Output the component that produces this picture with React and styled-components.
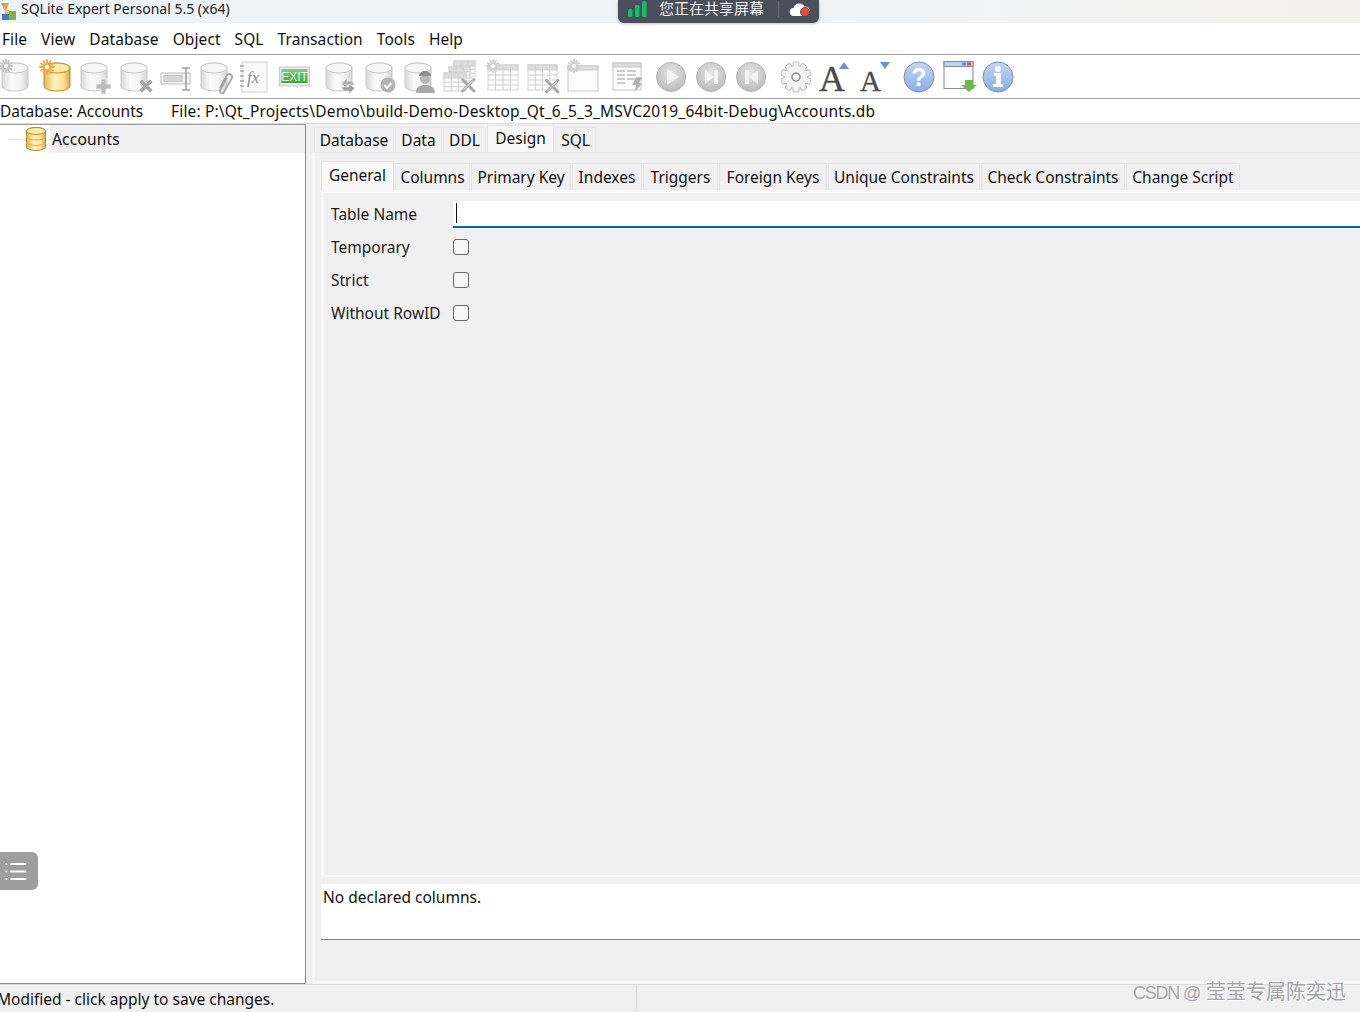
import React from 'react';
import styled, { createGlobalStyle } from 'styled-components';

const GlobalStyle = createGlobalStyle`
  html, body { margin: 0; padding: 0; height: 100%; overflow: hidden; }
  body { font-family: "Noto Sans", "Noto Sans CJK SC", sans-serif; color: #111; background: #fff; }
  #root { height: 1012px; }
`;

const Window = styled.div`
  position: relative;
  display: flex;
  flex-direction: column;
  width: 1360px;
  height: 1012px;
  overflow: hidden;
`;

const TitleBar = styled.div`
  height: 23px;
  display: flex;
  align-items: center;
  gap: 3px;
  font-size: 14px;
  color: #222;
  background: linear-gradient(90deg, #eef3f8 0%, #eff3f7 60%, #f3f1ec 100%);
`;

const TitleText = styled.span`
  margin-top: -6px;
`;

const MenuBar = styled.div`
  height: 31px;
  display: flex;
  align-items: center;
  gap: 14px;
  padding-left: 2px;
  font-size: 15.5px;
  letter-spacing: 0.08px;
  background: #fff;
  border-bottom: 1px solid #a0a0a0;
`;

const MenuItem = styled.span``;

const ToolBar = styled.div`
  height: 43px;
  display: flex;
  align-items: center;
  background: #fff;
  border-bottom: 1px solid #a0a0a0;
`;

const ToolButton = styled.div`
  flex: none;
  width: 32px;
  height: 34px;
  margin-left: ${(p) => p.$gap}px;
  display: flex;
  svg { display: block; overflow: visible; }
`;

const PathBar = styled.div`
  height: 24px;
  display: flex;
  align-items: center;
  font-size: 15.5px;
  background: #fff;
  border-bottom: 1px solid #dcdcdc;
`;

const PathLabel = styled.span`
  width: 171px;
  flex: none;
`;

const PathValue = styled.span`
  letter-spacing: 0.17px;
  white-space: nowrap;
`;

const Main = styled.div`
  flex: 1;
  min-height: 0;
  display: flex;
  background: #f0f0f0;
`;

const TreePane = styled.div`
  width: 305px;
  flex: none;
  background: #fff;
  border-top: 1px solid #a0a0a0;
  border-right: 1px solid #8a8a92;
  border-bottom: 1px solid #8a8a92;
`;

const TreeRow = styled.div`
  height: 28px;
  display: flex;
  align-items: center;
  font-size: 15.5px;
  padding-left: 8px;
  background: linear-gradient(90deg, #fff 0, #fff 50px, #f0f0f0 50px);
`;

const TreeBranch = styled.span`
  width: 14px;
  margin-right: 4px;
  border-top: 1px solid #dedede;
  flex: none;
`;

const TreeLabel = styled.span`
  margin-left: 6px;
  letter-spacing: 0.2px;
`;

const RightPane = styled.div`
  flex: 1;
  min-width: 0;
  display: flex;
  flex-direction: column;
  padding: 1px 0 0 6px;
`;

const TabRow = styled.div`
  display: flex;
  align-items: flex-end;
  flex: none;
  height: ${(p) => p.$height}px;
  margin-left: ${(p) => p.$indent || 0}px;
`;

const Tab = styled.div`
  box-sizing: border-box;
  height: ${(p) => (p.$active ? p.$height + 2 : p.$height)}px;
  width: ${(p) => p.$width}px;
  margin-right: 1px;
  font-size: 15.5px;
  display: flex;
  align-items: center;
  justify-content: center;
  background: ${(p) => (p.$active ? '#f8f8f8' : '#f0f0f0')};
  border: 1px solid #e6e6e6;
  border-bottom: none;
  padding-bottom: ${(p) => (p.$active ? 3 : 0)}px;
  white-space: nowrap;
`;

const OuterPane = styled.div`
  flex: 1;
  min-height: 0;
  display: flex;
  flex-direction: column;
  background: #f0f0f0;
  padding: 8px 0 0 6px;
  border-top: 1px solid #e8e8e8;
  border-left: 3px solid #f7f7f7;
  border-bottom: 3px solid #f7f7f7;
`;

const InnerPane = styled.div`
  box-sizing: border-box;
  height: 687px;
  flex: none;
  background: #f0f0f0;
  border: solid #f8f8f8;
  border-width: 3px 0 2px 3px;
  padding: 8px 0 0 7px;
  display: flex;
  flex-direction: column;
`;

const FormRow = styled.div`
  display: flex;
  align-items: center;
  height: ${(p) => p.$height}px;
  font-size: 15.5px;
`;

const FormLabel = styled.label`
  width: 122px;
  flex: none;
  color: #1c1c1c;
  margin-top: ${(p) => (p.$lift ? -1 : 0)}px;
`;

const TextInput = styled.div`
  flex: 1;
  height: 27px;
  box-sizing: border-box;
  background: #fff;
  border-bottom: 2px solid #0067c0;
  padding: 2px 0 3px 3px;
  display: flex;
`;

const Caret = styled.span`
  width: 1px;
  background: #111;
`;

const CheckBox = styled.span`
  box-sizing: border-box;
  width: 16px;
  height: 16px;
  border: 1px solid #6a6a6a;
  border-radius: 3px;
  background: #f6f6f6;
`;

const Checks = styled.div`
  padding-top: 2px;
`;

const Description = styled.div`
  box-sizing: border-box;
  flex: none;
  height: 56px;
  margin-top: 7px;
  padding: 2px 0 0 2px;
  background: #fff;
  border-bottom: 1px solid #808080;
  font-size: 15.5px;
`;

const StatusBar = styled.div`
  box-sizing: border-box;
  flex: none;
  height: 28px;
  display: flex;
  align-items: center;
  background: #f0f0f0;
  font-size: 15.5px;
  border-top: 1px solid #dcdcdc;
`;

const StatusCell = styled.div`
  box-sizing: border-box;
  width: 637px;
  height: 100%;
  display: flex;
  align-items: center;
  border-right: 1px solid #d8d8d8;
  overflow: hidden;
`;

const StatusText = styled.span`
  margin-left: -3px;
  white-space: nowrap;
`;

const ShareBadge = styled.div`
  position: absolute;
  left: 618px;
  top: 0;
  width: 201px;
  height: 23px;
  box-sizing: border-box;
  display: flex;
  align-items: center;
  padding: 0 0 5px 10px;
  background: #4b4f5c;
  border-radius: 0 0 6px 6px;
  color: #f1f1f1;
  font-size: 15px;
  font-family: "Noto Sans CJK SC", sans-serif;
  box-shadow: 0 1px 3px rgba(0, 0, 0, 0.25);
`;

const ShareText = styled.span`
  margin-left: 11px;
  width: 119px;
  flex: none;
  line-height: 14px;
  margin-top: -2px;
  white-space: nowrap;
`;

const ShareDivider = styled.span`
  width: 1px;
  height: 16px;
  background: #6c707c;
  flex: none;
  margin-right: 10px;
`;

const FloatButton = styled.div`
  position: absolute;
  left: 0;
  top: 852px;
  width: 38px;
  height: 38px;
  box-sizing: border-box;
  padding-left: 5px;
  background: #9e9e9e;
  border-radius: 0 6px 6px 0;
  display: flex;
  align-items: center;
`;

const Watermark = styled.div`
  position: absolute;
  right: 14px;
  top: 979px;
  font-family: "Liberation Sans", "Noto Sans CJK SC", sans-serif;
  font-size: 20px;
  line-height: 26px;
  color: rgba(150, 150, 150, 0.85);
  text-shadow: 1px 1px 0 rgba(255, 255, 255, 0.7);
  white-space: nowrap;
`;

const WatermarkLatin = styled.span`
  font-size: 18px;
  letter-spacing: -1.200px;
  margin-right: 6px;
`;

const Defs = styled.svg`
  width: 0;
  height: 0;
  display: block;
  flex: none;
`;

const SharedDefs = () => (
  <Defs aria-hidden="true">
    <defs>
      <linearGradient id="grayBody" x1="0" x2="1" y1="0" y2="0">
        <stop offset="0" stopColor="#d8d8d8" />
        <stop offset="0.35" stopColor="#fafafa" />
        <stop offset="0.7" stopColor="#f4f4f4" />
        <stop offset="1" stopColor="#d4d4d4" />
      </linearGradient>
      <linearGradient id="yellowBody" x1="0" x2="1" y1="0" y2="0">
        <stop offset="0" stopColor="#e9b552" />
        <stop offset="0.4" stopColor="#fff2c0" />
        <stop offset="0.75" stopColor="#fbe09a" />
        <stop offset="1" stopColor="#dba444" />
      </linearGradient>
      <linearGradient id="blueBall" x1="0" x2="0" y1="0" y2="1">
        <stop offset="0" stopColor="#c3d6f2" />
        <stop offset="1" stopColor="#88ade8" />
      </linearGradient>
      <radialGradient id="grayBall" cx="0.5" cy="0.35" r="0.7">
        <stop offset="0" stopColor="#e6e6e6" />
        <stop offset="1" stopColor="#b8b8b8" />
      </radialGradient>
      <linearGradient id="greenExit" x1="0" x2="0" y1="0" y2="1">
        <stop offset="0" stopColor="#7fd07f" />
        <stop offset="1" stopColor="#3fa33f" />
      </linearGradient>
    </defs>
  </Defs>
);

const Icon = ({ children }) => (
  <svg width="32" height="34" viewBox="0 0 32 34">{children}</svg>
);

const Cylinder = ({ x = 2, y = 3, w = 26, h = 28, tone = 'gray' }) => {
  const e = 5;
  const rx = w / 2;
  const stroke = tone === 'gray' ? '#c8c8c8' : '#c08a2c';
  const fill = tone === 'gray' ? 'url(#grayBody)' : 'url(#yellowBody)';
  const top = tone === 'gray' ? '#f6f6f6' : '#fde9a8';
  return (
    <g stroke={stroke} strokeWidth="1">
      <path
        d={`M${x} ${y + e}A${rx} ${e} 0 0 1 ${x + w} ${y + e}V${y + h - e}A${rx} ${e} 0 0 1 ${x} ${y + h - e}Z`}
        fill={fill}
      />
      <ellipse cx={x + rx} cy={y + e} rx={rx} ry={e} fill={top} />
    </g>
  );
};

const Burst = ({ cx = 6, cy = 6, color = '#c4c4c4', r = 6 }) => (
  <g stroke={color} strokeWidth="1.800" strokeLinecap="round">
    {[0, 30, 60, 90, 120, 150].map((a) => (
      <line
        key={a}
        x1={cx - r * Math.cos((a * Math.PI) / 180)}
        y1={cy - r * Math.sin((a * Math.PI) / 180)}
        x2={cx + r * Math.cos((a * Math.PI) / 180)}
        y2={cy + r * Math.sin((a * Math.PI) / 180)}
      />
    ))}
    <circle cx={cx} cy={cy} r={r / 3} fill="#fff" stroke="none" />
  </g>
);

const Plus = () => (
  <path d="M21 19h5v5h5v5h-5v5h-5v-5h-5v-5h5z" fill="#bcbcbc" stroke="#fff" strokeWidth="0.600" />
);

const Cross = () => (
  <path d="M19 22l3-3 4 4 4-4 3 3-4 4 4 4-3 3-4-4-4 4-3-3 4-4z" fill="#a8a8a8" stroke="#fff" strokeWidth="0.600" />
);

const Wrench = ({ x = 0, y = 0 }) => (
  <g transform={`translate(${x} ${y})`} strokeLinecap="round" fill="none">
    <path d="M1.500 13L13 1.500M1.500 1.500L13 13" stroke="#a8a8a8" strokeWidth="3" />
    <path d="M3 11.500L11.500 3" stroke="#fff" strokeWidth="0.800" />
  </g>
);

const Grid = ({ x, y, w, h, rows = 3, cols = 3, head = true }) => {
  const cells = [];
  for (let i = 1; i < rows + 1; i++) {
    const yy = y + 5 + ((h - 5) / (rows + 1)) * i;
    cells.push(<line key={`r${i}`} x1={x} x2={x + w} y1={yy} y2={yy} />);
  }
  for (let i = 1; i < cols; i++) {
    const xx = x + (w / cols) * i;
    cells.push(<line key={`c${i}`} x1={xx} x2={xx} y1={y} y2={y + h} />);
  }
  return (
    <g stroke="#d0d0d0" strokeWidth="1">
      <rect x={x} y={y} width={w} height={h} fill="#fdfdfd" />
      {head && <rect x={x} y={y} width={w} height={5} fill="#dedede" />}
      {cells}
    </g>
  );
};

const NewDbGray = () => <Icon><Cylinder /><Burst cx={6} cy={6} /></Icon>;
const NewDbYellow = () => (
  <Icon>
    <Cylinder tone="yellow" x={4} y={3} w={26} h={28} />
    <Burst cx={7} cy={7} color="#f2a73a" r={7} />
  </Icon>
);
const DbAdd = () => <Icon><Cylinder x={1} w={26} /><Plus /></Icon>;
const DbRemove = () => <Icon><Cylinder x={1} w={26} /><Cross /></Icon>;
const Rename = () => (
  <Icon>
    <rect x="1" y="13" width="29" height="11" fill="#f2f2f2" stroke="#bdbdbd" />
    <rect x="4" y="15.500" width="18" height="6" fill="#d6d6d6" stroke="#c4c4c4" />
    <path d="M22 8h8M26 8v22M22 30h8" stroke="#a0a0a0" strokeWidth="1.600" fill="none" />
  </Icon>
);
const DbClip = () => (
  <Icon>
    <Cylinder x={1} w={26} />
    <path
      d="M21 31l7-13a3 3 0 0 1 5 3l-8 14a2 2 0 0 1-4-2l7-12"
      transform="translate(-1 -3)"
      fill="none"
      stroke="#a4a4a4"
      strokeWidth="1.800"
    />
  </Icon>
);
const Formula = () => (
  <Icon>
    <rect x="3" y="2" width="25" height="30" fill="#fafafa" stroke="#d0d0d0" />
    <path d="M1 6h4M1 11h4M1 16h4M1 21h4M1 26h4" stroke="#a8a8a8" strokeWidth="1.400" />
    <text x="8" y="23" fontFamily="Liberation Serif" fontStyle="italic" fontSize="17" fill="#8c8c8c">fx</text>
  </Icon>
);
const ExitSign = () => (
  <Icon>
    <rect x="0.500" y="7" width="30" height="19" fill="#e8e8e8" stroke="#c8c8c8" />
    <rect x="2.500" y="9" width="26" height="14" fill="url(#greenExit)" />
    <text x="15.500" y="20.500" textAnchor="middle" fontFamily="Liberation Sans" fontSize="12" fill="#e6f7e6">EXIT</text>
  </Icon>
);
const DbArrow = () => (
  <Icon>
    <Cylinder x={2} w={26} />
    <path d="M17 24l6-6v3h5l3 4h-8v3z" fill="#b0b0b0" stroke="#fff" strokeWidth="0.500" />
    <path d="M31 28l-6 6v-3h-5l-3-4h8v-3z" fill="#a0a0a0" stroke="#fff" strokeWidth="0.500" />
  </Icon>
);
const DbCheck = () => (
  <Icon>
    <Cylinder x={2} w={26} />
    <circle cx="24" cy="25" r="7.500" fill="#b4b4b4" />
    <path d="M20.500 25l2.500 3 4.500-5" fill="none" stroke="#fff" strokeWidth="2" />
  </Icon>
);
const DbWorker = () => (
  <Icon>
    <Cylinder x={1} w={26} />
    <circle cx="21" cy="19" r="5" fill="#b8b8b8" />
    <path d="M15 16a6 5 0 0 1 12 0z" fill="#8e8e8e" />
    <path d="M12 33c0-6 4-8 9-8s10 2 10 8z" fill="#a8a8a8" />
  </Icon>
);
const TablesTools = () => (
  <Icon>
    <Grid x={10} y={1} w={21} h={16} rows={2} />
    <Grid x={5} y={7} w={21} h={14} rows={2} />
    <Grid x={0} y={13} w={22} h={18} rows={2} />
    <Wrench x={17} y={18} />
  </Icon>
);
const TableNew = () => (
  <Icon>
    <Grid x={1} y={5} w={30} h={25} rows={3} cols={4} />
    <Burst cx={6} cy={6} color="#d0d0d0" r={6} />
  </Icon>
);
const TableTools = () => (
  <Icon>
    <Grid x={1} y={5} w={29} h={25} rows={3} cols={4} />
    <Wrench x={18} y={19} />
  </Icon>
);
const WindowNew = () => (
  <Icon>
    <rect x="1" y="6" width="30" height="25" fill="#fcfcfc" stroke="#c8c8c8" />
    <rect x="1" y="6" width="30" height="4" fill="#dedede" stroke="#c8c8c8" />
    <Burst cx={7} cy={6} color="#d0d0d0" r={6} />
  </Icon>
);
const TableBolt = () => (
  <Icon>
    <rect x="1" y="3" width="28" height="27" fill="#fcfcfc" stroke="#c4c4c4" />
    <rect x="1" y="3" width="28" height="4" fill="#dcdcdc" stroke="#c4c4c4" />
    <path d="M5 11h8M15 11h9M5 15h8M15 15h9M5 19h8M15 19h9M5 23h8" stroke="#bcbcbc" strokeWidth="1.400" />
    <path d="M24 17h7l-4 6h4l-9 10 2-8h-4z" fill="#b0b0b0" stroke="#fff" strokeWidth="0.500" />
  </Icon>
);
const Ball = ({ children }) => (
  <Icon>
    <circle cx="15" cy="17" r="14.500" fill="url(#grayBall)" stroke="#b4b4b4" />
    {children}
  </Icon>
);
const Play = () => <Ball><path d="M11 9l12 8-12 8z" fill="#f4f4f4" /></Ball>;
const Next = () => <Ball><path d="M9 10l9 7-9 7zM18 10h4v14h-4z" fill="#f4f4f4" /></Ball>;
const Prev = () => <Ball><path d="M22 10l-9 7 9 7zM9 10h4v14H9z" fill="#f4f4f4" /></Ball>;
const Gear = () => {
  const teeth = [];
  for (let i = 0; i < 10; i++) {
    teeth.push(
      <rect key={i} x="13" y="2" width="6" height="6" rx="1" fill="#f2f2f2" stroke="#bcbcbc" transform={`rotate(${i * 36} 16 17)`} />,
    );
  }
  return (
    <Icon>
      {teeth}
      <circle cx="16" cy="17" r="11" fill="#f4f4f4" />
      <circle cx="16" cy="17" r="4" fill="#fafafa" stroke="#909090" strokeWidth="1.500" />
    </Icon>
  );
};
const FontUp = () => (
  <Icon>
    <text x="0" y="31" fontFamily="Liberation Serif" fontSize="36" fill="#4c4c4c" stroke="#4c4c4c" strokeWidth="0.400">A</text>
    <path d="M20 9l5-7 5 7z" fill="#6b92d0" />
  </Icon>
);
const FontDown = () => (
  <Icon>
    <text x="0" y="31" fontFamily="Liberation Serif" fontSize="29" fill="#4c4c4c" stroke="#4c4c4c" strokeWidth="0.400">A</text>
    <path d="M20 2h10l-5 7z" fill="#6b92d0" />
  </Icon>
);
const Help = () => (
  <Icon>
    <circle cx="16" cy="17" r="15" fill="url(#blueBall)" stroke="#7d8fb4" />
    <text x="16" y="26" textAnchor="middle" fontFamily="Liberation Sans" fontWeight="700" fontSize="25" fill="#fff">?</text>
  </Icon>
);
const WindowDown = () => (
  <Icon>
    <rect x="1" y="1.500" width="29" height="27" fill="#fcfcfc" stroke="#8a8a8a" />
    <rect x="1" y="1.500" width="29" height="5" fill="#bcd2f0" stroke="#8a8a8a" />
    <rect x="19" y="2.500" width="4" height="3" fill="#6b92d0" />
    <rect x="24" y="2.500" width="4" height="3" fill="#d05050" />
    <path d="M22 21h8v5h4l-8 7-8-7h4z" transform="translate(0 -1)" fill="#6cb84a" />
  </Icon>
);
const Info = () => (
  <Icon>
    <circle cx="15" cy="17" r="15" fill="url(#blueBall)" stroke="#7d8fb4" />
    <circle cx="15" cy="9" r="3" fill="#fff" />
    <path d="M11 13h7v11h2v3h-10v-3h3v-8h-2z" fill="#fff" />
  </Icon>
);

const TitleIcon = () => (
  <svg width="18" height="18" viewBox="0 0 18 18">
    <path d="M1 0l5 0-2 6z" fill="#e09a2a" />
    <path d="M6 0l3 0-3 8-2-1z" fill="#d9a441" />
    <rect x="9" y="8" width="7" height="9" fill="#7cb342" />
    <rect x="2" y="11" width="7" height="6" fill="#4a78c8" />
    <rect x="5" y="7" width="4" height="4" fill="#e3c24a" />
  </svg>
);

const TreeIcon = () => (
  <svg width="20" height="24" viewBox="0 0 20 24">
    <path d="M.5 4A9.500 3.500 0 0 1 19.500 4V20A9.500 3.500 0 0 1 .5 20Z" fill="url(#yellowBody)" stroke="#b8862c" />
    <ellipse cx="10" cy="4" rx="9.500" ry="3.500" fill="#fde9a8" stroke="#b8862c" />
    <path d="M.5 9.500A9.500 3.500 0 0 0 19.500 9.500M.5 15A9.500 3.500 0 0 0 19.500 15" fill="none" stroke="#d9ad58" />
  </svg>
);

const ShareBars = () => (
  <svg width="20" height="16" viewBox="0 0 20 16">
    <rect x="0" y="8" width="4.500" height="8" rx="1.500" fill="#0fbf62" />
    <rect x="7" y="4" width="4.500" height="12" rx="1.500" fill="#0fbf62" />
    <rect x="14" y="0" width="4.500" height="16" rx="1.500" fill="#0fbf62" />
  </svg>
);

const ShareCloud = () => (
  <svg width="22" height="18" viewBox="0 0 22 18">
    <path d="M5 16a4 4 0 0 1-.500-8 6 6 0 0 1 11-1.500 4.500 4.500 0 0 1 1 9.500z" fill="#fff" />
    <circle cx="16" cy="12" r="4.500" fill="#f04a35" stroke="#4b4f5c" strokeWidth="1" />
  </svg>
);

const ListGlyph = () => (
  <svg width="22" height="18" viewBox="0 0 22 18" fill="none" stroke="#fff" strokeWidth="1.800" strokeLinecap="round">
    <path d="M6 2h14.500M6 9.500h14.500M6 17h14.500" />
    <path d="M1.200 2h.3M1.200 9.500h.3M1.200 17h.3" />
  </svg>
);

const tools = [
  [NewDbGray, 0],
  [NewDbYellow, 8],
  [DbAdd, 8],
  [DbRemove, 8],
  [Rename, 8],
  [DbClip, 8],
  [Formula, 7],
  [ExitSign, 8],
  [DbArrow, 13],
  [DbCheck, 8],
  [DbWorker, 8],
  [TablesTools, 8],
  [TableNew, 11],
  [TableTools, 8],
  [WindowNew, 8],
  [TableBolt, 13],
  [Play, 12],
  [Next, 8],
  [Prev, 8],
  [Gear, 12],
  [FontUp, 7],
  [FontDown, 9],
  [Help, 11],
  [WindowDown, 8],
  [Info, 8],
];

const menus = ['File', 'View', 'Database', 'Object', 'SQL', 'Transaction', 'Tools', 'Help'];

const outerTabs = [
  ['Database', 80],
  ['Data', 47],
  ['DDL', 43],
  ['Design', 67, true],
  ['SQL', 41],
];

const innerTabs = [
  ['General', 73, true],
  ['Columns', 75],
  ['Primary Key', 100],
  ['Indexes', 70],
  ['Triggers', 75],
  ['Foreign Keys', 108],
  ['Unique Constraints', 152],
  ['Check Constraints', 144],
  ['Change Script', 114],
];

const checks = ['Temporary', 'Strict', 'Without RowID'];

function App() {
  return (
    <Window>
      <GlobalStyle />
      <SharedDefs />
      <TitleBar>
        <TitleIcon />
        <TitleText>SQLite Expert Personal 5.5 (x64)</TitleText>
      </TitleBar>
      <MenuBar>
        {menus.map((m) => (
          <MenuItem key={m}>{m}</MenuItem>
        ))}
      </MenuBar>
      <ToolBar>
        {tools.map(([Glyph, gap], i) => (
          <ToolButton key={i} $gap={gap}>
            <Glyph />
          </ToolButton>
        ))}
      </ToolBar>
      <PathBar>
        <PathLabel>Database: Accounts</PathLabel>
        <PathValue>File: P:\Qt_Projects\Demo\build-Demo-Desktop_Qt_6_5_3_MSVC2019_64bit-Debug\Accounts.db</PathValue>
      </PathBar>
      <Main>
        <TreePane>
          <TreeRow>
            <TreeBranch />
            <TreeIcon />
            <TreeLabel>Accounts</TreeLabel>
          </TreeRow>
        </TreePane>
        <RightPane>
          <TabRow $height={27} $indent={2}>
            {outerTabs.map(([label, width, active]) => (
              <Tab key={label} $width={width} $active={active} $height={25}>
                {label}
              </Tab>
            ))}
          </TabRow>
          <OuterPane>
            <TabRow $height={29}>
              {innerTabs.map(([label, width, active]) => (
                <Tab key={label} $width={width} $active={active} $height={27}>
                  {label}
                </Tab>
              ))}
            </TabRow>
            <InnerPane>
              <FormRow $height={27}>
                <FormLabel $lift>Table Name</FormLabel>
                <TextInput>
                  <Caret />
                </TextInput>
              </FormRow>
              <Checks>
                {checks.map((c) => (
                  <FormRow key={c} $height={33}>
                    <FormLabel>{c}</FormLabel>
                    <CheckBox />
                  </FormRow>
                ))}
              </Checks>
            </InnerPane>
            <Description>No declared columns.</Description>
          </OuterPane>
        </RightPane>
      </Main>
      <StatusBar>
        <StatusCell>
          <StatusText>Modified - click apply to save changes.</StatusText>
        </StatusCell>
      </StatusBar>
      <ShareBadge>
        <ShareBars />
        <ShareText>您正在共享屏幕</ShareText>
        <ShareDivider />
        <ShareCloud />
      </ShareBadge>
      <FloatButton>
        <ListGlyph />
      </FloatButton>
      <Watermark>
        <WatermarkLatin>CSDN @</WatermarkLatin>莹莹专属陈奕迅
      </Watermark>
    </Window>
  );
}

export default App;
